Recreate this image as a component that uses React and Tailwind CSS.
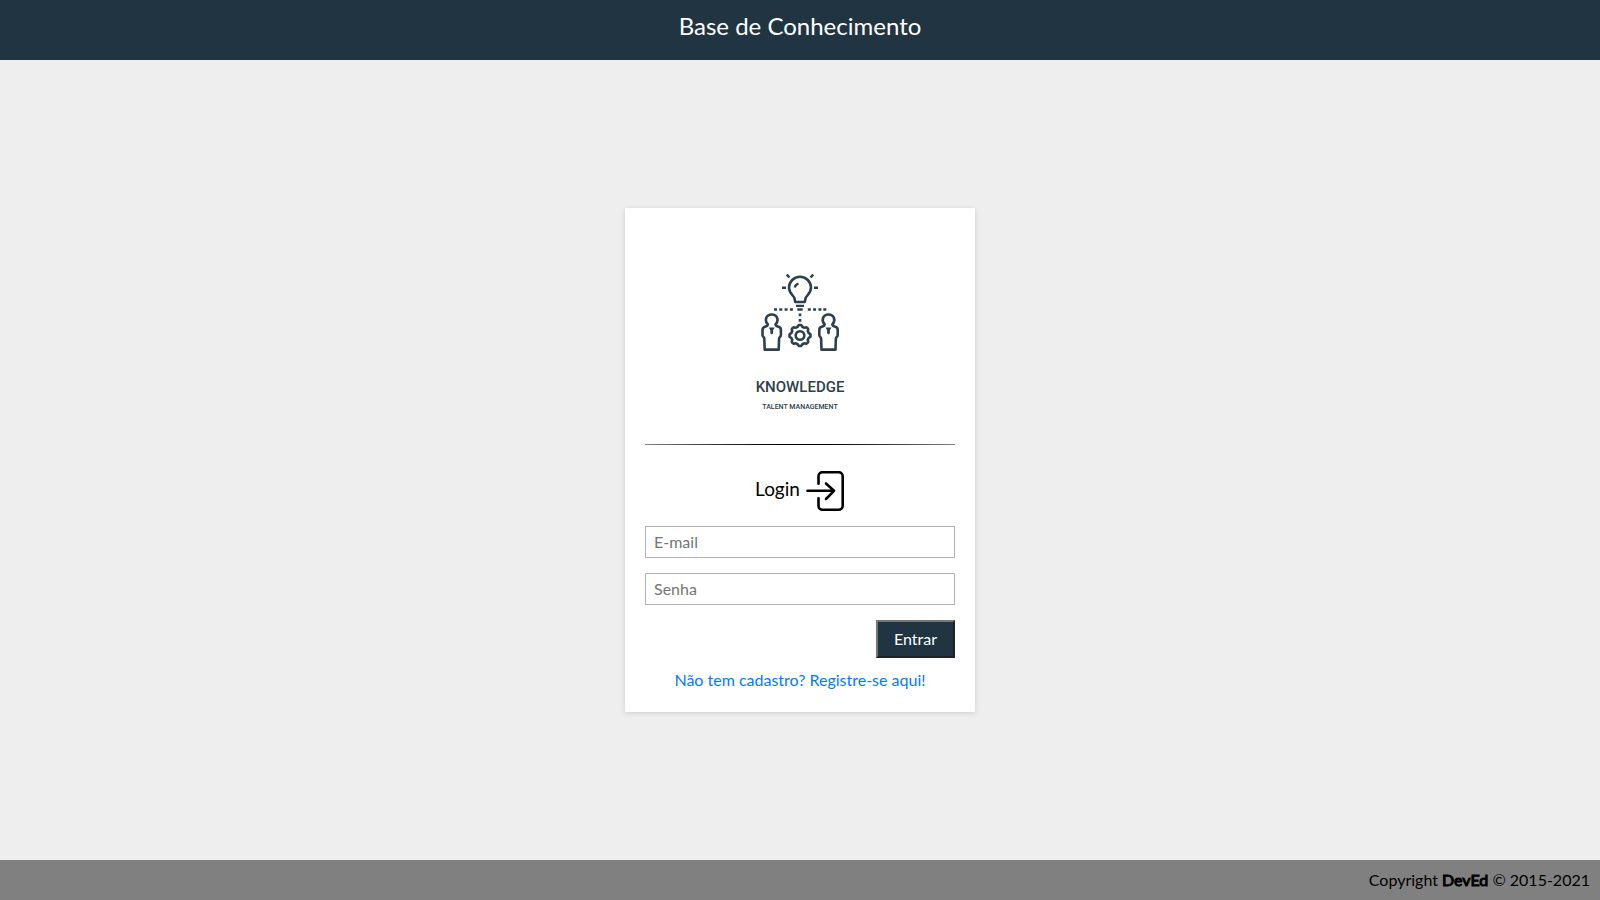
const GEAR_POINTS = Array.from({ length: 96 }, (_, i) => {
  const angle = (i / 96) * Math.PI * 2;
  const radius = 9.7 + Math.tanh(2.5 * Math.cos(8 * angle)) * 0.8;
  return `${(60 + radius * Math.sin(angle)).toFixed(2)},${(75.5 - radius * Math.cos(angle)).toFixed(2)}`;
}).join(' ');

function Person({ x }) {
  return (
    <g transform={`translate(${x} 0)`}>
      <path d="M-3.8 64.5C-7.4 61 -6 54.5 0 54.5S7.4 61 3.8 64.5C4 66 5.5 66.3 7 66.8C8.5 67.3 9.2 68.5 9.2 70V75.3C9.2 76.7 7.4 77 7.4 78.5L7 89.6H-7L-7.4 78.5C-7.4 77 -9.2 76.7 -9.2 75.3V70C-9.2 68.5 -8.5 67.3 -7 66.8C-5.5 66.3 -4 66 -3.8 64.5Z" />
      <path d="M-3 67.5H3L1.4 70.2V73.2L0 74.6L-1.4 73.2V70.2Z" fill="currentColor" stroke="none" />
    </g>
  );
}

function KnowledgeMark() {
  return (
    <svg className="mx-auto block" width="120" height="100" viewBox="0 0 120 100" fill="none" stroke="currentColor" strokeWidth="2.6" strokeLinejoin="round" aria-hidden="true">
      <path d="M55.2 42L54.5 38.4C53.8 35.6 49 33.3 49 27.8A11 11 0 0 1 71 27.8C71 33.3 66.2 35.6 65.5 38.4L64.8 42Z" />
      <path d="M54.8 27.4C55.2 25.4 56.5 24.2 58.5 23.6" strokeWidth="2.4" />
      <path d="M42 27.8H46M74 27.8H78M46.8 14.5L49.4 17.5M73.2 14.5L70.6 17.5" strokeWidth="2.6" />
      <path d="M56 45.9H64M57.3 49.5H62.7" strokeWidth="2.4" />
      <path d="M34 49.5H37M39.3 49.5H42.3M44.6 49.5H47.6M49.9 49.5H52.9M67.8 49.5H70.8M73.1 49.5H76.1M78.4 49.5H81.4M83.3 49.5H86.3M60 53.5V56.2M60 59V61.7" strokeWidth="2.6" />
      <Person x={31.7} />
      <Person x={88.5} />
      <polygon points={GEAR_POINTS} />
      <circle cx="60" cy="75.5" r="4.3" />
    </svg>
  );
}

function LoginIcon() {
  return (
    <svg width="40" height="40" viewBox="0 0 40 40" fill="none" stroke="currentColor" strokeWidth="2.6" strokeLinecap="round" strokeLinejoin="round" aria-hidden="true">
      <path d="M13.5 13V5.5A4 4 0 0 1 17.5 1.5H33.7A4 4 0 0 1 37.7 5.5V35A4 4 0 0 1 33.7 39H17.5A4 4 0 0 1 13.5 35V27.5" transform="translate(0 -0.3)" />
      <path d="M2.5 19.8H29M21 12.5L29 19.8L21 28" />
    </svg>
  );
}

const FIELD = 'block h-8 w-full border border-[#b3b3b3] bg-white px-2 pb-[2px] text-base text-black outline-none placeholder:text-[#757575]';

export default function App() {
  return (
    <div className="flex min-h-screen flex-col bg-[#eeeeee] font-['Lato',sans-serif] text-base text-[#212529]">
      <header className="h-15 bg-[#203541] pt-2 text-center text-white">
        <h1 className="text-2xl leading-9">Base de Conhecimento</h1>
      </header>

      <main className="flex flex-1 items-center justify-center">
        <section className="w-full max-w-[350px] bg-white p-5 shadow-[0_1px_5px_rgba(0,0,0,0.15)]">
          <div className="pt-8 text-center font-['Roboto',sans-serif] font-medium text-[#2c414d]">
            <KnowledgeMark />
            <p className="mt-[15px] text-[15px] leading-6">KNOWLEDGE</p>
            <p className="text-[7px] leading-4">TALENT MANAGEMENT</p>
          </div>

          <div role="separator" className="mt-[29px] h-px bg-linear-to-r from-[#808080] via-black to-[#808080]" />

          <form onSubmit={(event) => event.preventDefault()}>
            <div className="mt-[26px] flex justify-center gap-[5px] text-black">
              <h2 className="text-[19px] leading-9">Login</h2>
              <LoginIcon />
            </div>
            <input type="email" aria-label="E-mail" placeholder="E-mail" className={`mt-[15px] ${FIELD}`} />
            <input type="password" aria-label="Senha" placeholder="Senha" className={`mt-[15px] ${FIELD}`} />
            <div className="mt-[15px] flex justify-end">
              <button type="submit" className="h-[38px] border-2 border-t-[#767676] border-r-[#212121] border-b-[#212121] border-l-[#767676] bg-[#203541] px-4 text-white">
                Entrar
              </button>
            </div>
          </form>

          <p className="mt-[10px] text-center leading-6">
            <a href="#registro" className="text-[#007bff]">Não tem cadastro? Registre-se aqui!</a>
          </p>
        </section>
      </main>

      <footer className="h-10 bg-[#808080] px-[10px] text-right leading-10 text-black">
        Copyright <b className="font-normal [-webkit-text-stroke:1px_black]">DevEd</b> © 2015-2021
      </footer>
    </div>
  );
}
